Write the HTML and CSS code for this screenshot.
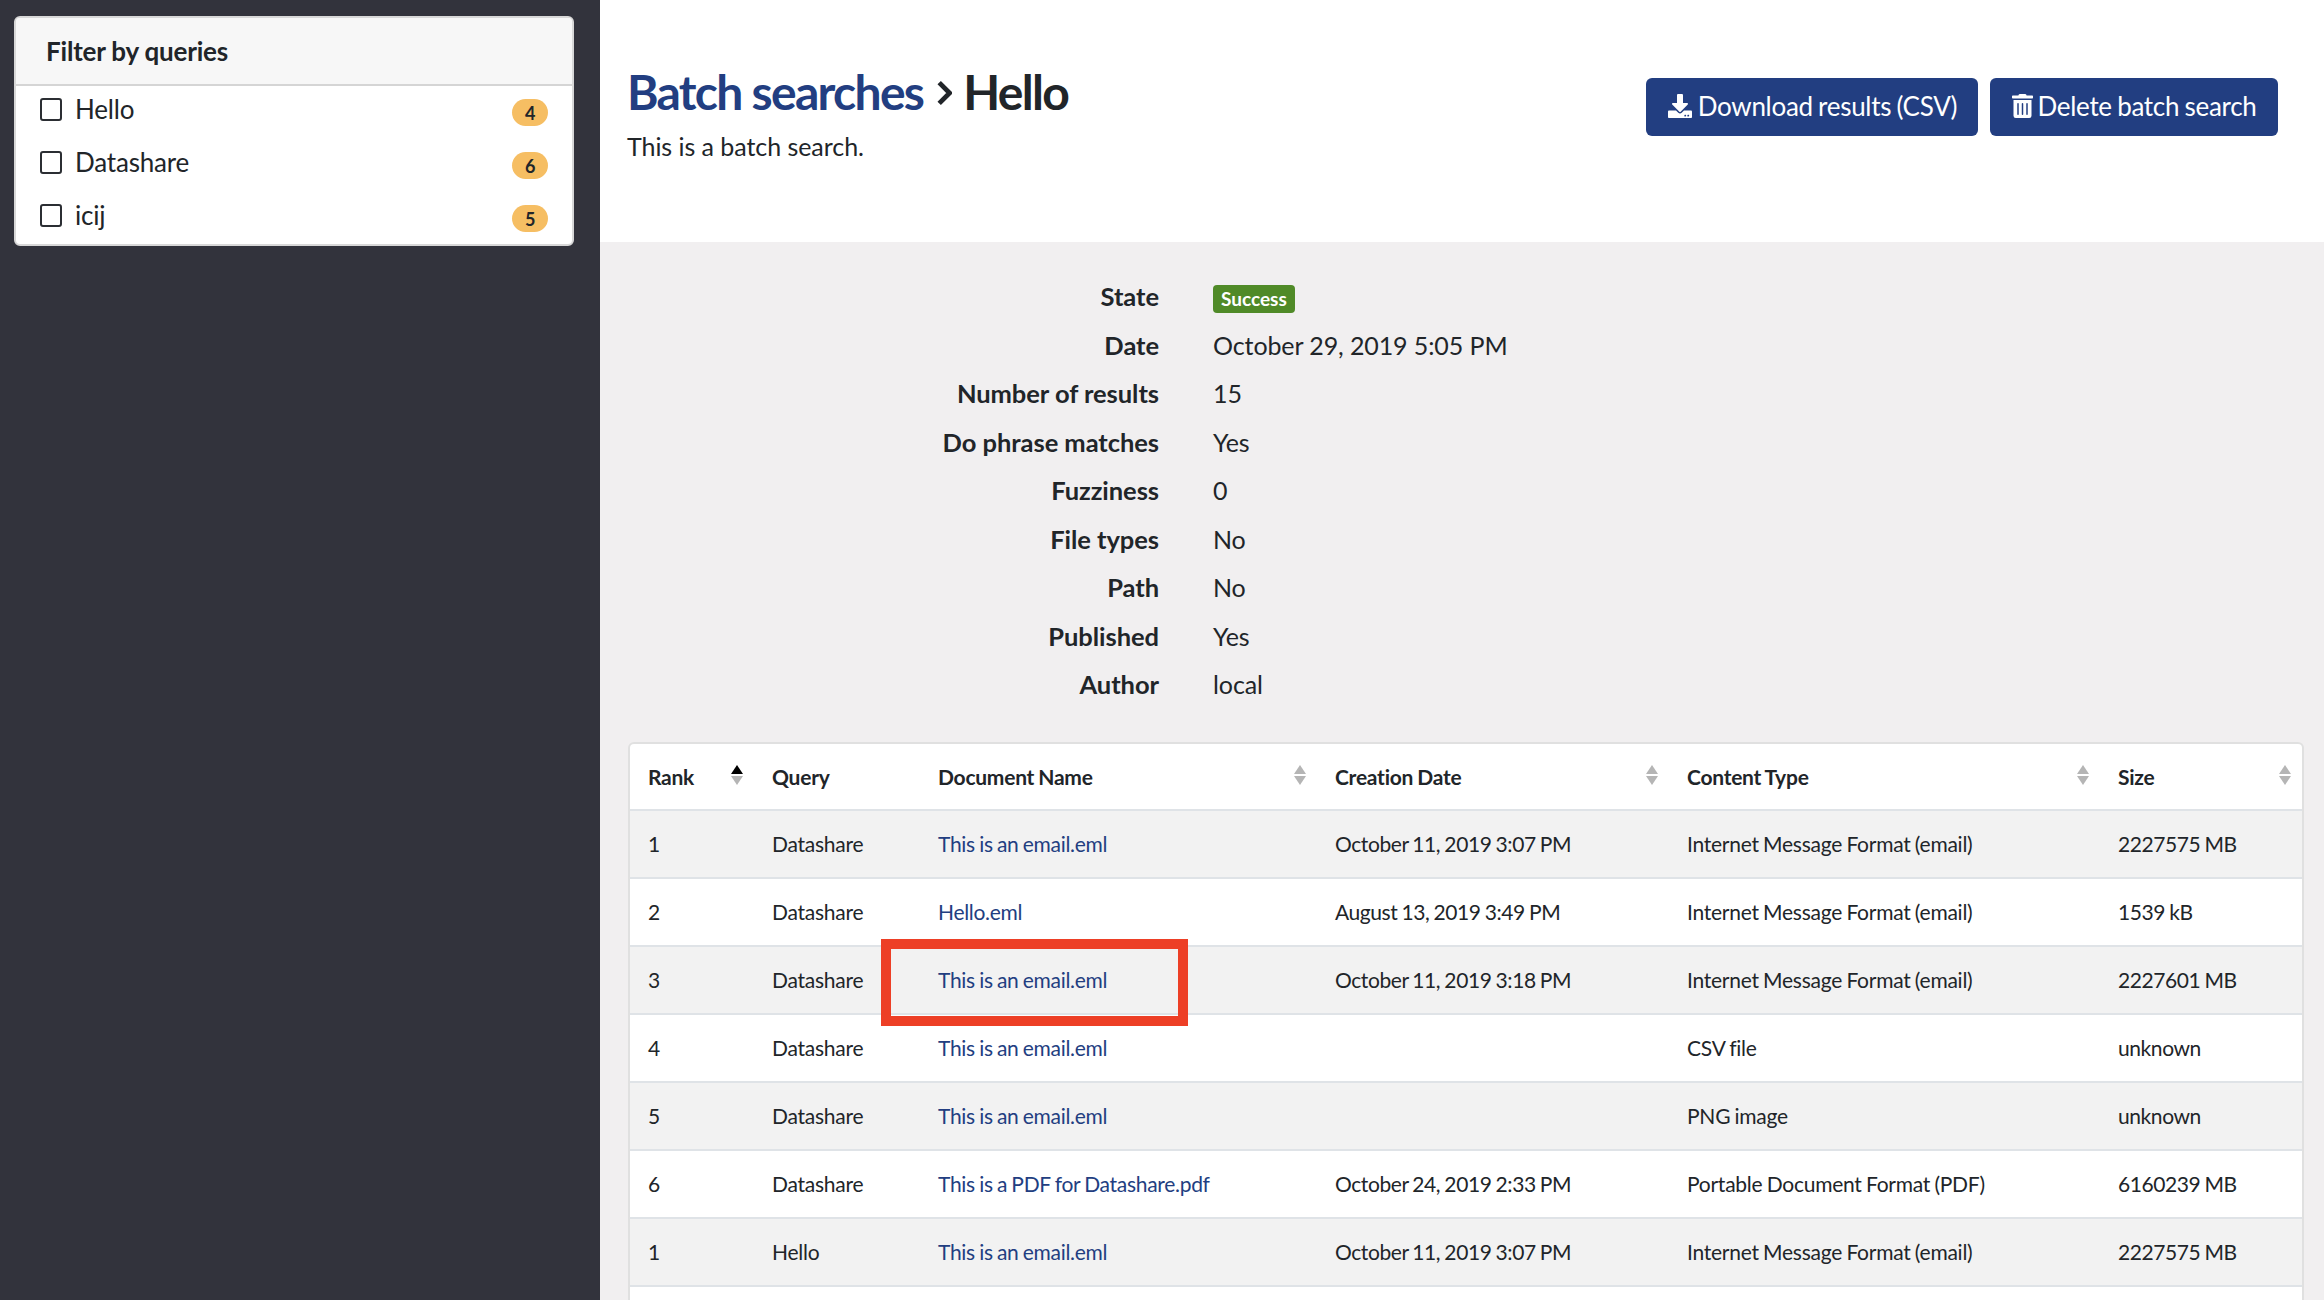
FILE: index.html
```html
<!DOCTYPE html>
<html lang="en">
<head>
<meta charset="utf-8">
<title>Batch search</title>
<link rel="stylesheet" href="styles.css">
</head>
<body>
<div class="page">
  <aside class="sidebar">
    <section class="card">
      <header class="card-head">Filter by queries</header>
      <ul class="filters">
        <li class="filter"><span class="check"></span><span class="filter-name">Hello</span><span class="count">4</span></li>
        <li class="filter"><span class="check"></span><span class="filter-name">Datashare</span><span class="count">6</span></li>
        <li class="filter"><span class="check"></span><span class="filter-name">icij</span><span class="count">5</span></li>
      </ul>
    </section>
  </aside>
  <main class="main">
    <header class="top">
      <div class="heading">
        <h1 class="title"><a class="crumb">Batch searches</a><svg class="chev" viewBox="0 0 10 16"><path d="M2 1.5 8.5 8 2 14.5" fill="none" stroke="currentColor" stroke-width="3"/></svg>Hello</h1>
        <p class="desc">This is a batch search.</p>
      </div>
      <div class="actions">
        <a class="btn btn-dl"><svg class="ico" viewBox="0 0 512 512"><path fill="currentColor" d="M216 0h80c13.3 0 24 10.7 24 24v168h87.7c17.8 0 26.7 21.5 14.1 34.1L269.7 378.3c-7.5 7.5-19.8 7.5-27.3 0L90.1 226.1c-12.6-12.6-3.7-34.1 14.1-34.1H192V24c0-13.3 10.7-24 24-24zm296 376v112c0 13.3-10.7 24-24 24H24c-13.3 0-24-10.7-24-24V376c0-13.3 10.7-24 24-24h146.7l49 49c20.1 20.1 52.5 20.1 72.6 0l49-49H488c13.3 0 24 10.7 24 24zm-124 88c0-11-9-20-20-20s-20 9-20 20 9 20 20 20 20-9 20-20zm64 0c0-11-9-20-20-20s-20 9-20 20 9 20 20 20 20-9 20-20z"/></svg>Download results (CSV)</a>
        <a class="btn btn-del"><svg class="ico ico-trash" viewBox="0 0 448 512"><path fill="currentColor" d="M32 464a48 48 0 0 0 48 48h288a48 48 0 0 0 48-48V128H32zm272-256a16 16 0 0 1 32 0v224a16 16 0 0 1-32 0zm-96 0a16 16 0 0 1 32 0v224a16 16 0 0 1-32 0zm-96 0a16 16 0 0 1 32 0v224a16 16 0 0 1-32 0zM432 32H312l-9.4-18.7A24 24 0 0 0 281.1 0H166.8a23.72 23.72 0 0 0-21.4 13.3L136 32H16A16 16 0 0 0 0 48v32a16 16 0 0 0 16 16h416a16 16 0 0 0 16-16V48a16 16 0 0 0-16-16z"/></svg>Delete batch search</a>
      </div>
    </header>
    <section class="body">
      <dl class="meta">
        <dt>State</dt><dd><span class="pill">Success</span></dd>
        <dt>Date</dt><dd>October 29, 2019 5:05 PM</dd>
        <dt>Number of results</dt><dd>15</dd>
        <dt>Do phrase matches</dt><dd>Yes</dd>
        <dt>Fuzziness</dt><dd>0</dd>
        <dt>File types</dt><dd>No</dd>
        <dt>Path</dt><dd>No</dd>
        <dt>Published</dt><dd>Yes</dd>
        <dt>Author</dt><dd>local</dd>
      </dl>
      <div class="table-wrap">
        <table class="results">
          <colgroup><col class="c-rank"><col class="c-query"><col class="c-doc"><col class="c-date"><col class="c-type"><col class="c-size"></colgroup>
          <thead>
            <tr>
              <th>Rank<svg class="sort" viewBox="0 0 12 20"><path class="on" d="M6 0 12 9H0z"/><path d="M0 11H12L6 20z"/></svg></th>
              <th>Query</th>
              <th>Document Name<svg class="sort" viewBox="0 0 12 20"><path d="M6 0 12 9H0z"/><path d="M0 11H12L6 20z"/></svg></th>
              <th>Creation Date<svg class="sort" viewBox="0 0 12 20"><path d="M6 0 12 9H0z"/><path d="M0 11H12L6 20z"/></svg></th>
              <th>Content Type<svg class="sort" viewBox="0 0 12 20"><path d="M6 0 12 9H0z"/><path d="M0 11H12L6 20z"/></svg></th>
              <th>Size<svg class="sort" viewBox="0 0 12 20"><path d="M6 0 12 9H0z"/><path d="M0 11H12L6 20z"/></svg></th>
            </tr>
          </thead>
          <tbody>
            <tr><td>1</td><td>Datashare</td><td><a>This is an email.eml</a></td><td class="num">October 11, 2019 3:07 PM</td><td>Internet Message Format (email)</td><td class="num">2227575 MB</td></tr>
            <tr><td>2</td><td>Datashare</td><td><a>Hello.eml</a></td><td class="num">August 13, 2019 3:49 PM</td><td>Internet Message Format (email)</td><td class="num">1539 kB</td></tr>
            <tr><td>3</td><td>Datashare</td><td class="marked"><a>This is an email.eml</a><span class="callout"></span></td><td class="num">October 11, 2019 3:18 PM</td><td>Internet Message Format (email)</td><td class="num">2227601 MB</td></tr>
            <tr><td>4</td><td>Datashare</td><td><a>This is an email.eml</a></td><td></td><td>CSV file</td><td class="num">unknown</td></tr>
            <tr><td>5</td><td>Datashare</td><td><a>This is an email.eml</a></td><td></td><td>PNG image</td><td class="num">unknown</td></tr>
            <tr><td>6</td><td>Datashare</td><td><a>This is a PDF for Datashare.pdf</a></td><td class="num">October 24, 2019 2:33 PM</td><td>Portable Document Format (PDF)</td><td class="num">6160239 MB</td></tr>
            <tr><td>1</td><td>Hello</td><td><a>This is an email.eml</a></td><td class="num">October 11, 2019 3:07 PM</td><td>Internet Message Format (email)</td><td class="num">2227575 MB</td></tr>
            <tr><td></td><td></td><td></td><td></td><td></td><td></td></tr>
          </tbody>
        </table>
      </div>
    </section>
  </main>
</div>
</body>
</html>
```

FILE: styles.css
```css
* { box-sizing: border-box; }
html, body { margin: 0; height: 100%; overflow: hidden; }
body { font-family: Lato, "Noto Sans", sans-serif; color: #212529; background: #fff; }
.page { display: flex; height: 1300px; overflow: hidden; }

.sidebar { flex: 0 0 600px; background: #32333c; padding: 16px 26px 0 14px; }
.card { height: 230px; background: #fff; border: 2px solid #d8d8d8; border-radius: 6px; overflow: hidden; }
.card-head { height: 68px; padding: 0 30px 1px; display: flex; align-items: center; font-size: 26px; letter-spacing: -0.2px; font-weight: 700; background: #f7f7f7; border-bottom: 2px solid #d5d5d5; }
.filters { list-style: none; margin: 0; padding: 0 24px; }
.filter { height: 53px; display: flex; align-items: center; font-size: 26px; letter-spacing: -0.2px; }
.check { width: 22px; height: 23px; border: 2.5px solid #2b2e33; border-radius: 3px; margin-right: 13px; margin-top: -6px; }
.filter-name { flex: 1; margin-top: -7px; }
.count { width: 36px; height: 27px; border-radius: 14px; background: #f6be63; font-size: 18px; font-weight: 700; display: flex; align-items: center; justify-content: center; }

.main { flex: 1; min-width: 0; }
.top { height: 242px; padding: 61px 46px 0 27px; display: flex; justify-content: space-between; }
.title { margin: 0; font-size: 48px; line-height: 62px; font-weight: 700; letter-spacing: -1.7px; display: flex; align-items: center; }
.crumb { color: #223e81; }
.chev { width: 16px; height: 26px; color: #212529; margin: 2px 11px 0 13px; }
.desc { margin: 7px 0 0; font-size: 25px; line-height: 32px; letter-spacing: -0.05px; }
.actions { display: flex; gap: 12px; margin-top: 17px; }
.btn { height: 58px; padding: 0 20px 2px; display: flex; align-items: center; justify-content: center; background: #223e81; color: #fff; border-radius: 6px; font-size: 26px; letter-spacing: -0.3px; word-spacing: -1px; white-space: nowrap; }
.btn-dl { width: 332px; }
.btn-del { width: 288px; }
.ico { width: 26px; height: 24px; margin-right: 5px; flex: none; }
.ico-trash { width: 21px; }

.body { background: #f1eff0; height: 1058px; padding: 30px 20px 0 28px; }
.meta { display: grid; grid-template-columns: 531px 1fr; column-gap: 54px; margin: 0 0 33px; font-size: 25px; line-height: 48.5px; }
.meta dt { text-align: right; font-weight: 700; font-size: 25.5px; letter-spacing: -0.05px; }
.meta dd { margin: 0; letter-spacing: -0.1px; }
.pill { display: inline-block; background: #508a28; color: #fff; font-size: 19px; font-weight: 700; line-height: 28px; padding: 0 8px; border-radius: 4px; letter-spacing: 0; vertical-align: 0; }

.table-wrap { background: #fff; border: 2px solid #e0e0e0; border-radius: 6px 6px 0 0; border-bottom: 0; }
.results { width: 100%; table-layout: fixed; border-collapse: collapse; font-size: 21px; letter-spacing: -0.25px; word-spacing: -0.8px; }
.c-rank { width: 124px; }
.c-query { width: 166px; }
.c-doc { width: 397px; }
.c-date { width: 352px; }
.c-type { width: 431px; }
.results th, .results td { height: 68px; padding: 0 18px; text-align: left; border-bottom: 2px solid #dfe3e7; white-space: nowrap; }
.results th { position: relative; height: 66px; font-weight: 700; }
.results .num { letter-spacing: -0.42px; }
.results tbody tr:nth-child(odd) { background: #f2f2f2; }
.results a { color: #223e81; letter-spacing: -0.3px; }
.sort { position: absolute; right: 11px; top: 21px; width: 12px; height: 20px; }
.sort path { fill: #b5b5b5; }
.sort .on { fill: #000; }
.marked { position: relative; }
.callout { position: absolute; left: -39px; top: -8px; width: 307px; height: 87px; border: 10px solid #ed3f26; }
```
